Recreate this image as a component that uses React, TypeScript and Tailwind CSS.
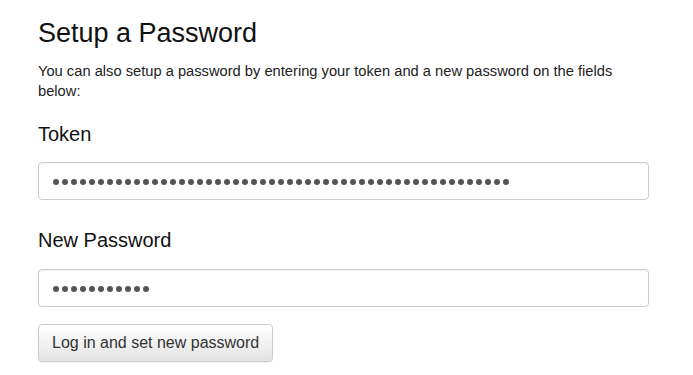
import React from 'react';

const Dots: React.FC<{ count: number }> = ({ count }) => (
  <div className="flex items-center gap-[3px]">
    {Array.from({ length: count }).map((_, i) => (
      <span key={i} className="block w-[6px] h-[6px] rounded-full bg-[#555]" />
    ))}
  </div>
);

const MaskedField: React.FC<{ count: number; label: string }> = ({ count, label }) => (
  <div
    role="textbox"
    aria-label={label}
    className="w-[611px] h-[38px] flex items-center pl-[14px] pt-[2px] bg-white border border-[#cccccc] rounded-[4px] shadow-[inset_0_1px_1px_rgba(0,0,0,0.05)]"
  >
    <Dots count={count} />
  </div>
);

export default function App() {
  return (
    <div className="min-h-screen bg-white pl-[38px] pt-[18px] font-['Liberation_Sans',Arial,sans-serif] text-[#222]">
      <h1 className="text-[27px] leading-[30px] text-[#111]">Setup a Password</h1>

      <p className="mt-[13px] text-[14.7px] leading-[20px] w-[585px]">
        You can also setup a password by entering your token and a new password on the fields below:
      </p>

      <label className="block mt-[21px] text-[20px] leading-[24px] text-[#111]">Token</label>
      <div className="mt-[16px]">
        <MaskedField count={51} label="Token" />
      </div>

      <label className="block mt-[28px] text-[20px] leading-[24px] text-[#111]">New Password</label>
      <div className="mt-[17px]">
        <MaskedField count={11} label="New Password" />
      </div>

      <button
        type="button"
        className="mt-[17px] h-[38px] px-[13px] text-[16px] text-[#333] border border-[#cccccc] rounded-[4px] bg-gradient-to-b from-white to-[#e3e3e3] shadow-[0_1px_1px_rgba(0,0,0,0.06)]"
      >
        Log in and set new password
      </button>
    </div>
  );
}
